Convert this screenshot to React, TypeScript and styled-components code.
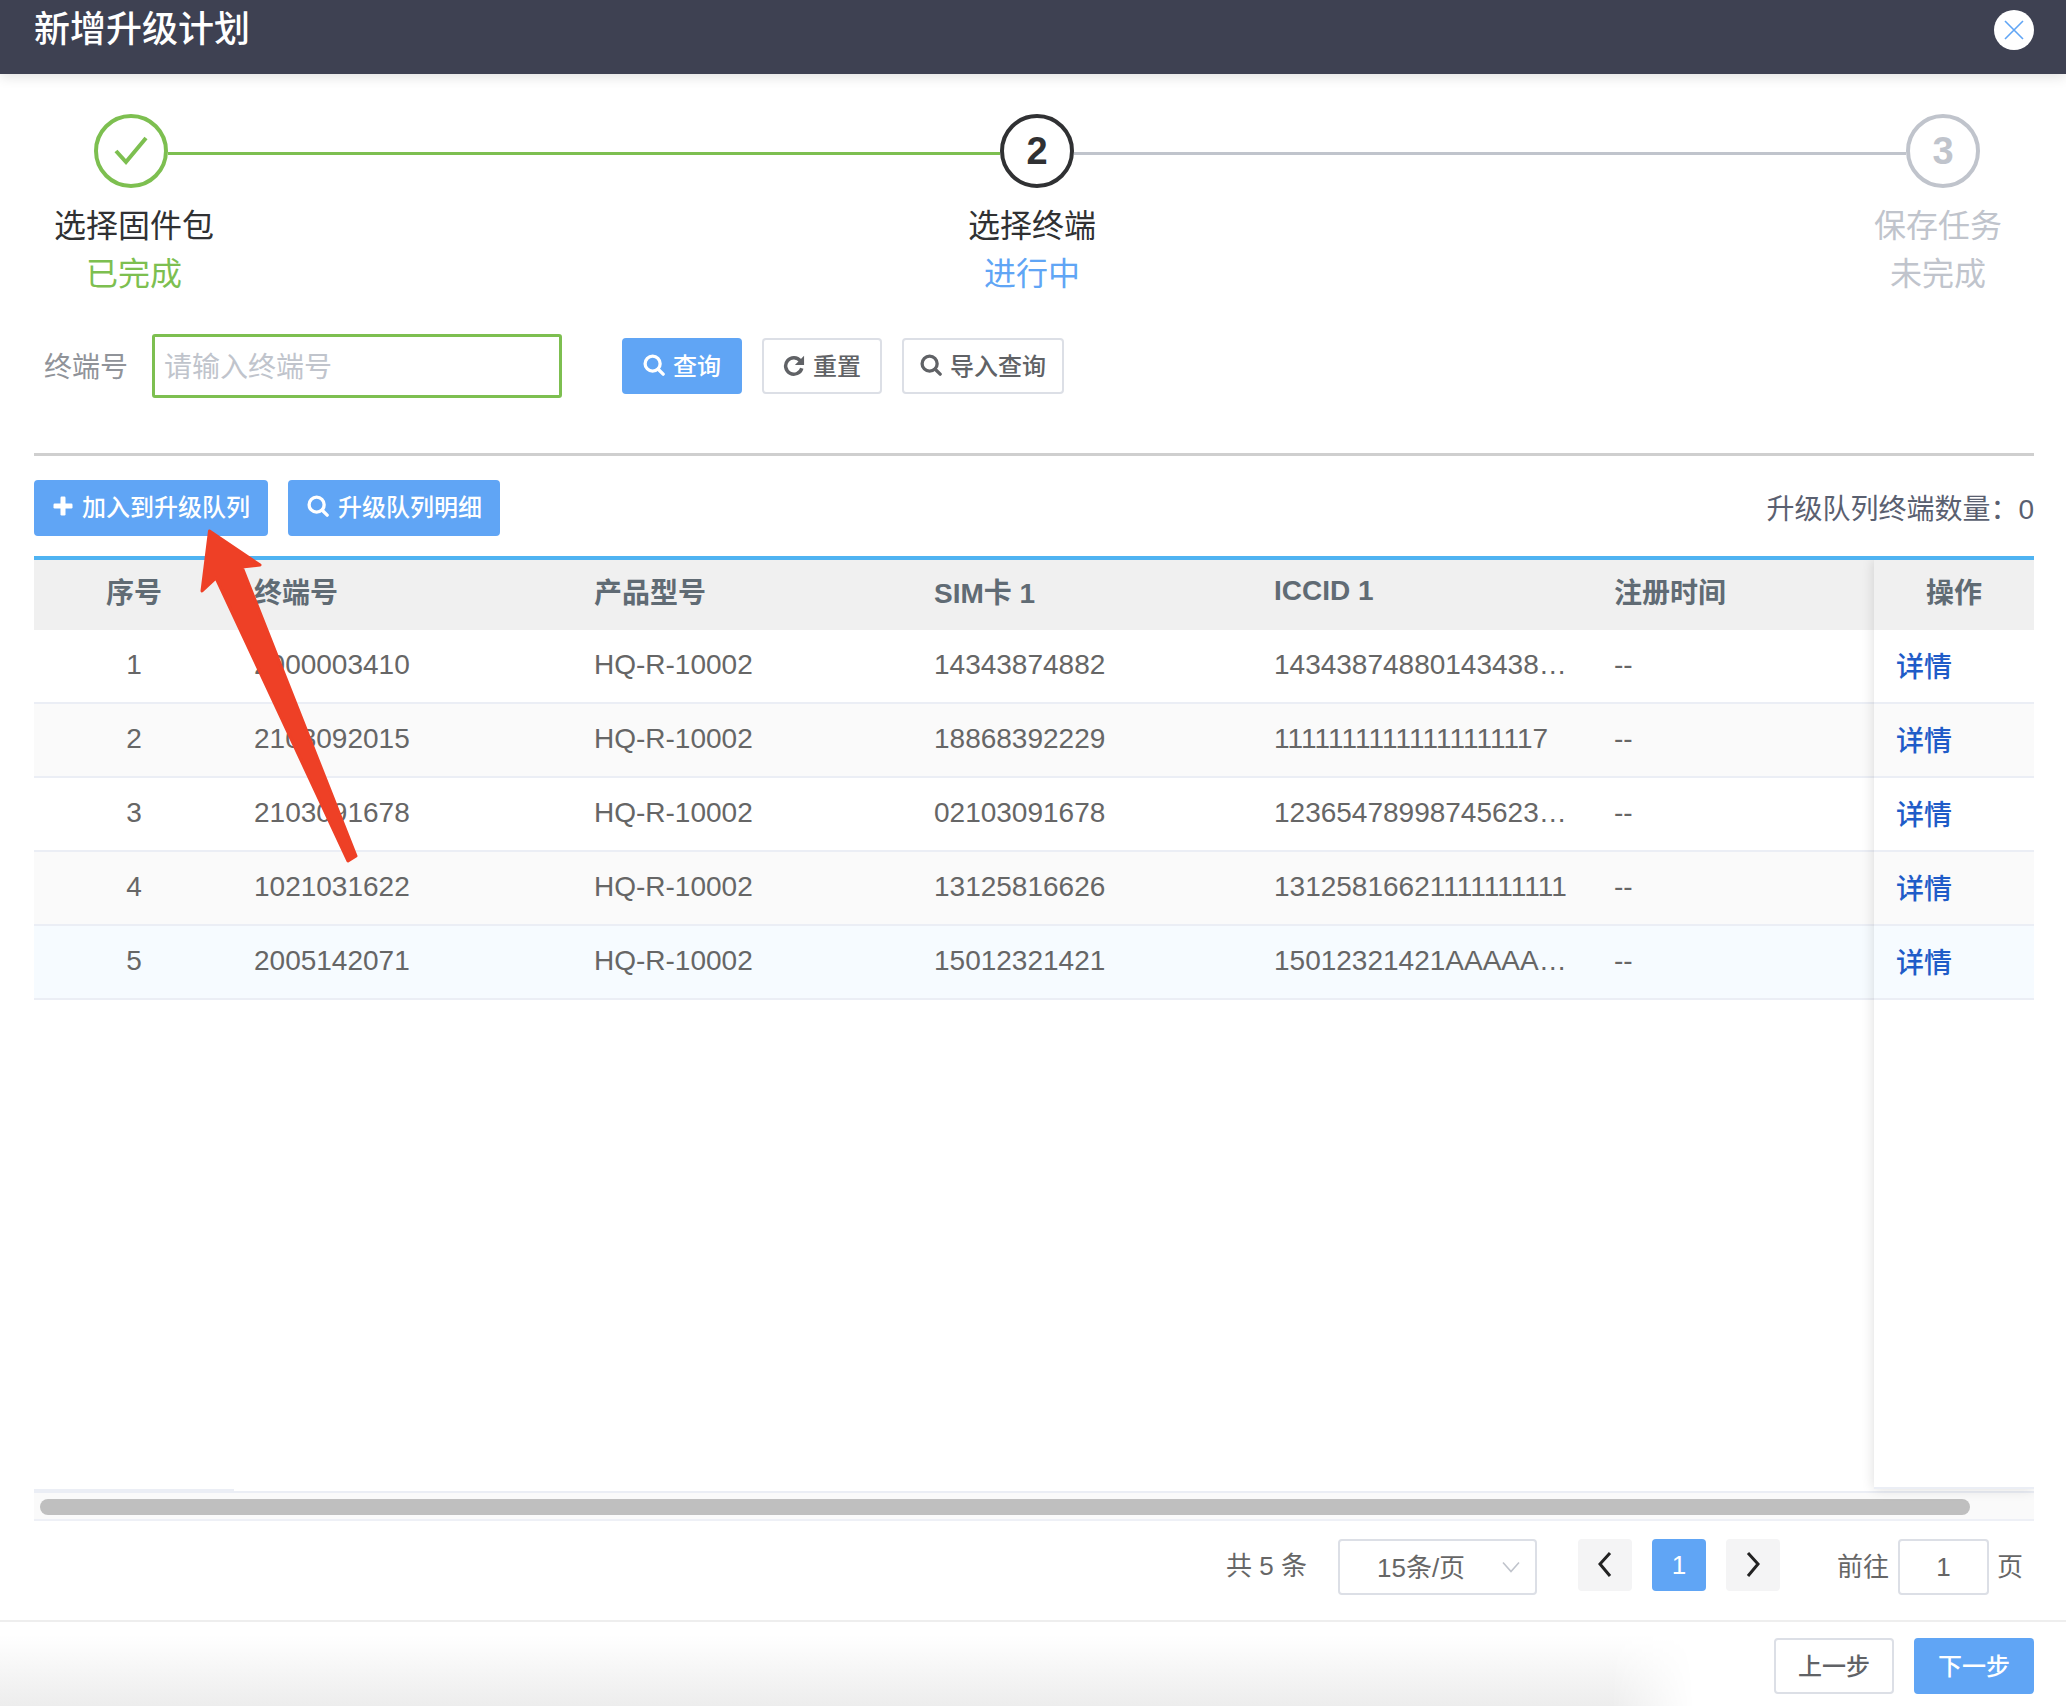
import React from "react";
import styled, { createGlobalStyle } from "styled-components";

const FONT = `"Liberation Sans", "Noto Sans CJK SC", sans-serif`;
const BLUE = "#60a5f5";
const GREEN = "#7dbf50";
const MUTED = "#c0c4cc";

const Global = createGlobalStyle`
  html, body { margin: 0; padding: 0; background: #fff; overflow: hidden; }
  * { box-sizing: border-box; }
  body { font-family: ${FONT}; }
`;

const Page = styled.div`
  position: relative;
  width: 2066px;
  height: 1706px;
  display: flex;
  flex-direction: column;
  overflow: hidden;
  background: #fff;
`;

const Header = styled.header`
  flex: none;
  height: 74px;
  background: #3e4152;
  box-shadow: 0 3px 12px rgba(0, 0, 0, 0.12);
  display: flex;
  align-items: flex-start;
  justify-content: space-between;
  padding: 9px 32px 0 34px;
  position: relative;
  z-index: 2;
`;

const Title = styled.h1`
  margin: 0;
  font-size: 36px;
  line-height: 42px;
  font-weight: 500;
  color: #fff;
`;

const Close = styled.button`
  width: 40px;
  height: 40px;
  margin-top: 1px;
  border: 0;
  padding: 0;
  border-radius: 50%;
  background: #fff;
  display: flex;
  align-items: center;
  justify-content: center;
`;

const StepHeads = styled.div`
  flex: none;
  display: flex;
  align-items: center;
  padding: 40px 86px 0 94px;
`;

const Circle = styled.div<{ $color: string }>`
  flex: none;
  width: 74px;
  height: 74px;
  border-radius: 50%;
  border: 4px solid ${(p) => p.$color};
  color: ${(p) => p.$color};
  display: flex;
  align-items: center;
  justify-content: center;
  font-size: 38px;
  font-weight: 700;
`;

const StepLine = styled.div<{ $color: string }>`
  flex: 1;
  height: 3px;
  margin-top: 5px;
  background: ${(p) => p.$color};
`;

const StepLabels = styled.div`
  flex: none;
  display: grid;
  grid-template-columns: 898px 906px 200px;
  padding: 14px 0 0 34px;
`;

const StepLabel = styled.div`
  width: 200px;
  text-align: center;
  font-size: 32px;
  line-height: 48px;
`;

const StepTitle = styled.div<{ $color: string }>`
  color: ${(p) => p.$color};
`;

const StepState = styled.div<{ $color: string }>`
  color: ${(p) => p.$color};
`;

const Form = styled.div`
  flex: none;
  display: flex;
  align-items: center;
  height: 64px;
  margin-top: 36px;
  padding-left: 44px;
`;

const FieldLabel = styled.label`
  width: 108px;
  font-size: 28px;
  color: #909399;
  padding-bottom: 2px;
`;

const TextInput = styled.div`
  width: 410px;
  height: 64px;
  border: 3px solid ${GREEN};
  border-radius: 3px;
  padding: 0 0 2px 9px;
  display: flex;
  align-items: center;
  font-size: 28px;
  color: #c0c4cc;
`;

const FormButtons = styled.div`
  display: flex;
  gap: 20px;
  margin-left: 60px;
`;

const Btn = styled.button<{ $w: number; $primary?: boolean }>`
  width: ${(p) => p.$w}px;
  height: 56px;
  padding: 0 0 3px;
  border-radius: 4px;
  border: 2px solid ${(p) => (p.$primary ? BLUE : "#dcdfe6")};
  background: ${(p) => (p.$primary ? BLUE : "#fff")};
  color: ${(p) => (p.$primary ? "#fff" : "#606266")};
  font-family: ${FONT};
  font-size: 24px;
  font-weight: 500;
  display: flex;
  align-items: center;
  justify-content: center;
  gap: 8px;
`;

const ToolBtn = styled(Btn)`
  padding: 0 0 5px 1px;
  gap: 9px;
`;

const Divider = styled.div`
  flex: none;
  height: 3px;
  margin: 55px 32px 0 34px;
  background: #cfcfcf;
`;

const Toolbar = styled.div`
  flex: none;
  height: 56px;
  margin: 24px 32px 0 34px;
  display: flex;
  align-items: center;
  gap: 20px;
`;

const QueueCount = styled.div`
  margin-left: auto;
  font-size: 28px;
  color: #5a6070;
  padding-bottom: 3px;
`;

const TableWrap = styled.div`
  position: relative;
  flex: none;
  height: 965px;
  margin: 20px 32px 0 34px;
  border-top: 4px solid #4fb3f2;
  display: flex;
  flex-direction: column;
  overflow: hidden;
`;

const TableBody = styled.div`
  flex: 1;
  min-height: 0;
`;

const Cell = styled.div<{ $center?: boolean }>`
  padding: ${(p) => (p.$center ? "0" : "0 20px")};
  text-align: ${(p) => (p.$center ? "center" : "left")};
  white-space: nowrap;
  overflow: hidden;
  text-overflow: ellipsis;
  margin-top: -2px;
`;

const Row = styled.div<{ $bg?: string }>`
  display: grid;
  grid-template-columns: 200px repeat(5, 340px);
  height: 74px;
  align-items: center;
  background: ${(p) => p.$bg || "#fff"};
  border-bottom: 2px solid #ebeef5;
  font-size: 28px;
  color: #666;
`;

const HeadRow = styled(Row)`
  height: 70px;
  background: #f0f0f0;
  border-bottom: 0;
  font-weight: 700;
  color: #606b74;
  font-size: 28px;
  & > ${Cell} {
    margin-top: -8px;
  }
`;

const FixedColumn = styled.div`
  position: absolute;
  top: 0;
  right: 0;
  width: 160px;
  bottom: 32px;
  background: #fff;
  box-shadow: 0 0 12px rgba(0, 0, 0, 0.14);
  border-bottom: 2px solid #ebeef5;
`;

const FixedHead = styled.div`
  height: 70px;
  background: #f0f0f0;
  display: flex;
  align-items: center;
  justify-content: center;
  font-size: 28px;
  font-weight: 700;
  color: #606b74;
  padding-bottom: 8px;
`;

const FixedCell = styled.div<{ $bg?: string }>`
  height: 74px;
  background: ${(p) => p.$bg || "#fff"};
  border-bottom: 2px solid #ebeef5;
  display: flex;
  align-items: center;
  padding: 0 0 2px 22px;
`;

const LinkText = styled.a`
  font-size: 28px;
  font-weight: 500;
  color: #1f5cc8;
`;

const LeftEdge = styled.div`
  position: absolute;
  left: 0;
  bottom: 30px;
  width: 200px;
  height: 2px;
  background: #ebeef5;
`;

const ScrollTrack = styled.div`
  flex: none;
  height: 30px;
  border-top: 2px solid #ebeef5;
  border-bottom: 2px solid #eef0f6;
  background: #fafafa;
  padding: 6px 64px 0 6px;
`;

const ScrollThumb = styled.div`
  height: 16px;
  border-radius: 8px;
  background: #bfbfbf;
`;

const Pagination = styled.div`
  flex: none;
  height: 99px;
  padding: 18px 43px 0 0;
  display: flex;
  align-items: flex-start;
  justify-content: flex-end;
  font-size: 26px;
  color: #666;
`;

const Total = styled.span`
  line-height: 54px;
  margin-right: 31px;
`;

const PageSelect = styled.div`
  position: relative;
  width: 199px;
  height: 56px;
  margin-right: 41px;
  border: 2px solid #dcdfe6;
  border-radius: 4px;
  padding: 0 0 3px 37px;
  display: flex;
  align-items: center;
  font-size: 26px;
  color: #666;
`;

const SelectCaret = styled.svg`
  position: absolute;
  right: 15px;
  top: 20px;
`;

const PageBtn = styled.div<{ $active?: boolean }>`
  width: 54px;
  height: 52px;
  border-radius: 4px;
  background: ${(p) => (p.$active ? BLUE : "#f4f4f5")};
  color: ${(p) => (p.$active ? "#fff" : "#222")};
  display: flex;
  align-items: center;
  justify-content: center;
  margin-right: 20px;
  font-size: 26px;
`;

const Goto = styled.span`
  line-height: 56px;
  margin-left: 37px;
  margin-right: 9px;
`;

const GotoInput = styled.div`
  width: 91px;
  height: 56px;
  border: 2px solid #dcdfe6;
  border-radius: 4px;
  display: flex;
  align-items: center;
  justify-content: center;
`;

const GotoUnit = styled.span`
  line-height: 56px;
  margin-left: 8px;
`;

const Footer = styled.footer`
  position: relative;
  flex: 1;
  border-top: 2px solid #eee;
  padding: 16px 32px 0 0;
  display: flex;
  justify-content: flex-end;
  gap: 20px;
  &::before {
    content: "";
    position: absolute;
    inset: 0;
    background: linear-gradient(to bottom, #fff 15%, #ededed 100%);
    -webkit-mask-image: linear-gradient(to right, #000 78%, transparent 82%);
    mask-image: linear-gradient(to right, #000 78%, transparent 82%);
  }
  & > * { position: relative; }
`;

const ArrowOverlay = styled.svg`
  position: absolute;
  left: 0;
  top: 0;
  pointer-events: none;
  z-index: 5;
`;

const SearchIcon = () => (
  <svg width="22" height="22" viewBox="0 0 24 24" fill="none" stroke="currentColor">
    <circle cx="10.5" cy="10.5" r="8.2" strokeWidth="3.6" />
    <line x1="16.6" y1="16.6" x2="22" y2="22" strokeWidth="3.6" strokeLinecap="round" />
  </svg>
);

const RefreshIcon = () => (
  <svg width="22" height="22" viewBox="0 0 24 24" fill="none">
    <path d="M19 7.5A9 9 0 1 0 20.5 15.5" stroke="currentColor" strokeWidth="3.8" />
    <path d="M23 2v10h-10z" fill="currentColor" />
  </svg>
);

const PlusIcon = () => (
  <svg width="20" height="20" viewBox="0 0 20 20" fill="currentColor">
    <rect x="7.5" y="0.5" width="5" height="19" rx="1.2" />
    <rect x="0.5" y="7.5" width="19" height="5" rx="1.2" />
  </svg>
);

const Chevron = ({ dir }: { dir: "left" | "right" }) => (
  <svg width="16" height="28" viewBox="0 0 16 28" fill="none" stroke="#222" strokeWidth="3">
    <path d={dir === "left" ? "M13 2 3 13l10 12" : "M3 2l10 11L3 25"} />
  </svg>
);

type RowData = { no: number; id: string; sim: string; iccid: string; bg?: string };

const rows: RowData[] = [
  { no: 1, id: "2000003410", sim: "14343874882", iccid: "143438748801434385521" },
  { no: 2, id: "2103092015", sim: "18868392229", iccid: "11111111111111111117", bg: "#fafafa" },
  { no: 3, id: "2103091678", sim: "02103091678", iccid: "123654789987456236541" },
  { no: 4, id: "1021031622", sim: "13125816626", iccid: "13125816621111111111", bg: "#fafafa" },
  { no: 5, id: "2005142071", sim: "15012321421", iccid: "15012321421AAAAAAAAAAAA", bg: "#f6fbff" },
];

export default function App() {
  return (
    <Page>
      <Global />
      <Header>
        <Title>新增升级计划</Title>
        <Close aria-label="关闭">
          <svg width="22" height="22" viewBox="0 0 22 22" stroke={BLUE} strokeWidth="1.6" fill="none">
            <path d="M2 2 20 20M20 2 2 20" />
          </svg>
        </Close>
      </Header>

      <StepHeads>
        <Circle $color={GREEN}>
          <svg width="36" height="32" viewBox="0 0 36 32" fill="none" stroke={GREEN} strokeWidth="4">
            <path d="M3 16 13 27 33 3" />
          </svg>
        </Circle>
        <StepLine $color={GREEN} />
        <Circle $color="#303133">2</Circle>
        <StepLine $color={MUTED} />
        <Circle $color={MUTED}>3</Circle>
      </StepHeads>

      <StepLabels>
        <StepLabel>
          <StepTitle $color="#303133">选择固件包</StepTitle>
          <StepState $color={GREEN}>已完成</StepState>
        </StepLabel>
        <StepLabel>
          <StepTitle $color="#303133">选择终端</StepTitle>
          <StepState $color={BLUE}>进行中</StepState>
        </StepLabel>
        <StepLabel>
          <StepTitle $color={MUTED}>保存任务</StepTitle>
          <StepState $color={MUTED}>未完成</StepState>
        </StepLabel>
      </StepLabels>

      <Form>
        <FieldLabel>终端号</FieldLabel>
        <TextInput>请输入终端号</TextInput>
        <FormButtons>
          <Btn $w={120} $primary><SearchIcon />查询</Btn>
          <Btn $w={120}><RefreshIcon />重置</Btn>
          <Btn $w={162}><SearchIcon />导入查询</Btn>
        </FormButtons>
      </Form>

      <Divider />

      <Toolbar>
        <ToolBtn $w={234} $primary><PlusIcon />加入到升级队列</ToolBtn>
        <ToolBtn $w={212} $primary><SearchIcon />升级队列明细</ToolBtn>
        <QueueCount>升级队列终端数量：0</QueueCount>
      </Toolbar>

      <TableWrap>
        <HeadRow>
          <Cell $center>序号</Cell>
          <Cell>终端号</Cell>
          <Cell>产品型号</Cell>
          <Cell>SIM卡 1</Cell>
          <Cell>ICCID 1</Cell>
          <Cell>注册时间</Cell>
        </HeadRow>
        <TableBody>
          {rows.map((r) => (
            <Row key={r.no} $bg={r.bg}>
              <Cell $center>{r.no}</Cell>
              <Cell>{r.id}</Cell>
              <Cell>HQ-R-10002</Cell>
              <Cell>{r.sim}</Cell>
              <Cell>{r.iccid}</Cell>
              <Cell>--</Cell>
            </Row>
          ))}
        </TableBody>
        <LeftEdge />
        <ScrollTrack>
          <ScrollThumb />
        </ScrollTrack>
        <FixedColumn>
          <FixedHead>操作</FixedHead>
          {rows.map((r) => (
            <FixedCell key={r.no} $bg={r.bg}>
              <LinkText>详情</LinkText>
            </FixedCell>
          ))}
        </FixedColumn>
      </TableWrap>

      <Pagination>
        <Total>共 5 条</Total>
        <PageSelect>
          15条/页
          <SelectCaret width="18" height="12" viewBox="0 0 18 12" fill="none" stroke="#c0c4cc" strokeWidth="1.6">
            <path d="M1 1.5 9 10.5 17 1.5" />
          </SelectCaret>
        </PageSelect>
        <PageBtn><Chevron dir="left" /></PageBtn>
        <PageBtn $active>1</PageBtn>
        <PageBtn><Chevron dir="right" /></PageBtn>
        <Goto>前往</Goto>
        <GotoInput>1</GotoInput>
        <GotoUnit>页</GotoUnit>
      </Pagination>

      <Footer>
        <Btn $w={120}>上一步</Btn>
        <Btn $w={120} $primary>下一步</Btn>
      </Footer>

      <ArrowOverlay width="2066" height="1706" viewBox="0 0 2066 1706">
        <path
          d="M209.5 531 260 565 242 567 356 856 348 861 216 578 202 591Z"
          fill="#ee4026"
          stroke="#ee4026"
          strokeWidth="3"
          strokeLinejoin="round"
        />
      </ArrowOverlay>
    </Page>
  );
}
